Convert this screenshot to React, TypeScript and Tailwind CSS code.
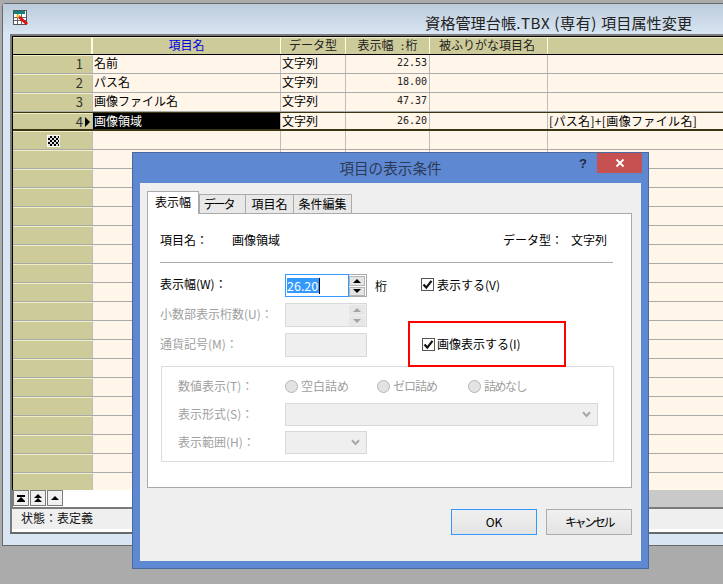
import React from "react";

const COLS = ["w-[80px]", "w-[188px]", "w-[65px]", "w-[84px]", "w-[118px]", "flex-1"];
const FONT = "font-['Noto_Sans_CJK_JP','Noto_Sans',sans-serif]";

const data: [string, string, string, string][] = [
  ["名前", "文字列", "22.53", ""],
  ["パス名", "文字列", "18.00", ""],
  ["画像ファイル名", "文字列", "47.37", ""],
  ["画像領域", "文字列", "26.20", "[パス名]+[画像ファイル名]"],
];

function Row({ n, idx }: { n: number; idx: number }) {
  const rec = data[idx];
  const current = idx === 3;
  const line = current ? "border-b-2 border-b-[#3a3512] border-t border-t-[#3a3512]" : "border-b border-b-[#aaaaaa]";
  return (
    <div className={`flex h-[19px] shrink-0 text-[12px] leading-[15px] text-black ${line}`}>
      <div className={`${COLS[0]} shrink-0 relative bg-[#cdcb99] border-r border-r-[#bdbdbd] border-t border-t-[#f0efc8] pr-[9px] text-right text-[13px] text-[#333]`}>
        {idx < 4 ? <span>{n}</span> : null}
        {current ? <span className="absolute right-[2px] top-[3px] w-0 h-0 border-y-[5px] border-y-transparent border-l-[5px] border-l-black" /> : null}
        {idx === 4 ? (
          <svg className="absolute left-[34px] top-[3px]" width="13" height="12" viewBox="0 0 13 12" shapeRendering="crispEdges">
            <rect width="13" height="12" fill="#fff" />
            <rect x="1" y="1" width="11" height="10" fill="#000" />
            {[0, 1, 2, 3, 4].map((r) =>
              [0, 1, 2, 3, 4, 5].map((c) =>
                (r + c) % 2 === 0 ? <rect key={`${r}-${c}`} x={1 + c * 2} y={1 + r * 2} width="1.5" height="2" fill="#ddd" /> : null
              )
            )}
          </svg>
        ) : null}
      </div>
      {[0, 1, 2, 3, 4].map((c) => {
        const val = rec ? (c === 4 ? rec[3] : c === 3 ? "" : rec[c]) : "";
        const sel = current && c === 0;
        return (
          <div
            key={c}
            className={`${COLS[c + 1]} ${c === 4 ? "tracking-[0.35px]" : "shrink-0 border-r border-r-[#bdbdbd]"} ${sel ? "bg-black text-white" : "bg-[#fff5e9]"} ${c === 2 ? "text-right pr-[2px] font-['DejaVu_Sans_Mono',monospace] text-[10px] text-[#222]" : "pl-px"} whitespace-nowrap overflow-hidden`}
          >
            {val}
          </div>
        );
      })}
    </div>
  );
}

function Spin({ disabled }: { disabled?: boolean }) {
  const c = disabled ? "#a5a5a5" : "#000";
  const Btn = ({ up }: { up?: boolean }) => (
    <div className={`h-[10px] flex items-center justify-center ${disabled ? "bg-[#e6e6e6]" : "bg-[#e4e4e4] border border-[#b5b5b5]"}`}>
      <span className={`w-0 h-0 border-x-[4px] border-x-transparent ${up ? "border-b-[4px]" : "border-t-[4px]"}`} style={up ? { borderBottomColor: c } : { borderTopColor: c }} />
    </div>
  );
  return (
    <div className="w-[17px] flex flex-col gap-px shrink-0 pt-px pr-px">
      <Btn up />
      <Btn />
    </div>
  );
}

function Check({ label, className }: { label: string; className?: string }) {
  return (
    <div className={`flex items-center gap-[3px] text-[12px] text-black ${className ?? ""}`}>
      <span className="w-[13px] h-[13px] border border-[#555] bg-white flex items-center justify-center">
        <svg width="11" height="11" viewBox="0 0 11 11"><path d="M1.5 5.5 L4.3 8.6 L9.5 1.8" fill="none" stroke="#111" strokeWidth="2.2" /></svg>
      </span>
      <span>{label}</span>
    </div>
  );
}

function Radio({ label, className, tight }: { label: string; className?: string; tight?: string }) {
  return (
    <div className={`flex items-center gap-[3px] ${className ?? ""}`}>
      <span className="w-[13px] h-[13px] rounded-full border border-[#b5b5b5] bg-[#e3e3e3]" />
      <span className={tight}>{label}</span>
    </div>
  );
}

function Chevron() {
  return (
    <svg width="9" height="7" viewBox="0 0 9 7" className="shrink-0">
      <path d="M1 1.2 L4.5 5 L8 1.2" fill="none" stroke="#a8a8a8" strokeWidth="2" />
    </svg>
  );
}

function Dialog() {
  return (
    <div className="absolute left-[132px] top-[152px] w-[517px] h-[417px] bg-[#5f88d3] border border-[#48699f] flex flex-col px-[7px] pb-[7px]">
      <div className="h-[30px] shrink-0 relative flex items-center justify-center text-[14.6px] text-[#2b3a55]">
        項目の表示条件
        <span className="absolute right-[54px] top-[1px] text-[13px] font-bold font-['Liberation_Sans',sans-serif] text-[#1f2a3f]">?</span>
        <span className="absolute -right-px top-0 w-[45px] h-[20px] bg-[#c75050] flex items-center justify-center">
          <svg width="10" height="10" viewBox="0 0 10 10"><path d="M1.5 1.5 L8.5 8.5 M8.5 1.5 L1.5 8.5" stroke="#fff" strokeWidth="1.8" /></svg>
        </span>
      </div>
      <div className="flex-1 bg-[#efefef] pt-[8px] pl-[7px] pr-[9px] flex flex-col">
        <div className="flex items-end h-[23px] relative z-10 text-[12px] text-black">
          <div className="w-[52px] h-[23px] bg-white border border-[#aaaaaa] border-b-0 flex items-center justify-center pb-[2px]">表示幅</div>
          <div className="w-[47px] h-[20px] bg-[#e8e8e8] border border-[#aaaaaa] flex items-center justify-center pr-[8px] tracking-[-2.2px]">データ</div>
          <div className="w-[48px] h-[20px] bg-[#e8e8e8] border border-[#aaaaaa] border-l-0 flex items-center justify-center">項目名</div>
          <div className="w-[58px] h-[20px] bg-[#e8e8e8] border border-[#aaaaaa] border-l-0 flex items-center justify-center">条件編集</div>
        </div>
        <div className="h-[275px] -mt-px bg-white border border-[#aaaaaa] pl-[12px] pr-[18px] pt-[16px] flex flex-col text-[12px] text-black">
          <div className="flex h-[20px] items-center">
            <span className="w-[72px]">項目名：</span>
            <span>画像領域</span>
            <span className="ml-auto w-[68px]">データ型：</span>
            <span className="w-[36px] mr-[6px]">文字列</span>
          </div>
          <div className="h-px bg-[#aaaaaa] mt-[12px]" />
          <div className="flex mt-[11px] h-[23px] items-center">
            <span className="w-[125px] pb-[3px]">表示幅(W)：</span>
            <div className="w-[82px] h-[23px] flex border border-[#a9a9a9] bg-white">
              <div className="flex-1 border border-[#3399ff] -m-px mr-0 flex items-center pl-[1px]">
                <span className="bg-[#3399ff] text-white text-[12.5px] leading-[15px] pr-px">26.20</span>
                <span className="w-px h-[16px] bg-black" />
              </div>
              <Spin />
            </div>
            <span className="ml-[8px]">桁</span>
            <Check label="表示する(V)" className="ml-[34px] pb-[2px]" />
          </div>
          <div className="flex mt-[6px] h-[24px] items-center text-[#a0a0a0]">
            <span className="w-[125px] pb-[2px]">小数部表示桁数(U)：</span>
            <div className="w-[82px] h-[24px] flex border border-[#d9d9d9] bg-[#efefef]">
              <div className="flex-1" />
              <Spin disabled />
            </div>
          </div>
          <div className="flex mt-[6px] h-[24px] items-center text-[#a0a0a0]">
            <span className="w-[125px] pb-[2px]">通貨記号(M)：</span>
            <div className="w-[82px] h-[24px] border border-[#d9d9d9] bg-[#efefef]" />
            <Check label="画像表示する(I)" className="ml-[55px] pb-[2px] [&>span:last-child]:-ml-px" />
          </div>
          <div className="mt-[9px] h-[96px] ml-px -mr-px border border-[#dcdcdc] pl-[16px] pt-[8px] flex flex-col text-[#a0a0a0]">
            <div className="flex h-[22px] items-center">
              <span className="w-[107px]">数値表示(T)：</span>
              <Radio label="空白詰め" className="w-[92px]" />
              <Radio label="ゼロ詰め" className="w-[91px]" tight="tracking-[-1px]" />
              <Radio label="詰めなし" tight="tracking-[-1.5px]" />
            </div>
            <div className="flex h-[24px] items-center mt-[5px]">
              <span className="w-[107px]">表示形式(S)：</span>
              <div className="w-[313px] h-[23px] border border-[#d9d9d9] bg-[#efefef] flex items-center justify-end pr-[6px]"><Chevron /></div>
            </div>
            <div className="flex h-[24px] items-center mt-[4px]">
              <span className="w-[107px]">表示範囲(H)：</span>
              <div className="w-[82px] h-[23px] border border-[#d9d9d9] bg-[#efefef] flex items-center justify-end pr-[6px]"><Chevron /></div>
            </div>
          </div>
        </div>
        <div className="flex justify-end gap-[9px] mt-[21px] text-[12px] text-black">
          <button className="w-[86px] h-[26px] bg-gradient-to-b from-[#f0f0f0] to-[#e3e3e3] border border-[#3399ff]">OK</button>
          <button className="w-[86px] h-[26px] bg-gradient-to-b from-[#f0f0f0] to-[#e3e3e3] border border-[#acacac] tracking-[-2.4px]">キャンセル</button>
        </div>
      </div>
    </div>
  );
}

function NavBtn({ bars, up }: { bars: number; up: number }) {
  return (
    <div className="w-[16px] h-[16px] bg-[#f0f0f0] border border-[#7a7a7a] flex flex-col items-center justify-center">
      {bars ? <span className="w-[8px] h-[2px] bg-black" /> : null}
      {Array.from({ length: up }).map((_, i) => (
        <span key={i} className="w-0 h-0 border-x-[4px] border-x-transparent border-b-[4px] border-b-black" />
      ))}
      {bars ? <span className="w-[8px] h-[1px] bg-black" /> : null}
    </div>
  );
}

const HCELL = "shrink-0 border-r border-r-[#fffde0] border-t border-t-[#efeec6]";
const MONO = "font-['DejaVu_Sans_Mono',monospace] text-[10px]";

export default function App() {
  return (
    <div className={`relative w-[723px] h-[586px] overflow-hidden bg-[#ababab] pt-[3px] pl-[2px] ${FONT}`}>
      <div className="h-[543px] bg-[#d8e5f2] border border-[#696969] border-r-0 rounded-tl-[4px] flex flex-col pl-[7px]">
        <div className="h-[30px] -ml-[7px] pl-[10px] shrink-0 bg-gradient-to-b from-[#bccbdb] to-[#d8e5f2] flex items-center relative">
          <svg width="16" height="16" viewBox="0 0 16 16" shapeRendering="crispEdges" className="mt-[-3px]">
            <rect x="0" y="0" width="13" height="14" fill="#fff" stroke="#555" />
            <rect x="1" y="1" width="11" height="3" fill="#118080" />
            <path d="M4.5 4V14M8.5 4V14M1 7.5H13M1 10.5H13" stroke="#666" />
            <path d="M5 6 L14 14" stroke="#e01010" strokeWidth="3" shapeRendering="auto" />
            <path d="M4 5 L6 7" stroke="#f5d020" strokeWidth="3" shapeRendering="auto" />
          </svg>
          <span className="absolute left-[422px] top-[5px] text-[15.2px] leading-[26px] text-[#222] whitespace-nowrap">
            資格管理台帳<span className="tracking-[0.55px]">.TBX (専有) </span>項目属性変更
          </span>
        </div>
        <div className="flex-1 border-t-2 border-l-2 border-[#7b7b7b] min-h-0 flex flex-col">
          <div className="border-t border-l border-black flex flex-col">
            <div className="flex h-[18px] shrink-0 text-[12px] leading-[14px] border-b border-b-black bg-[#cdcb99] text-[#222] text-center">
              <div className={`${COLS[0]} ${HCELL} border-r-2`} />
              <div className={`${COLS[1]} ${HCELL} text-[#0000e0]`}>項目名</div>
              <div className={`${COLS[2]} ${HCELL}`}>データ型</div>
              <div className={`${COLS[3]} ${HCELL} whitespace-nowrap`}>
                表示幅<span className={MONO}>&nbsp;:</span>桁
              </div>
              <div className={`${COLS[4]} ${HCELL} text-left pl-[9px] whitespace-nowrap`}>被ふりがな項目名</div>
              <div className="flex-1 border-t border-t-[#efeec6]" />
            </div>
            <div className="flex flex-col h-[435px] overflow-hidden">
              {Array.from({ length: 24 }).map((_, i) => (
                <Row key={i} n={i + 1} idx={i} />
              ))}
            </div>
          </div>
          <div className="flex h-[17px] shrink-0 bg-white border-l border-l-[#7b7b7b]">
            <div className="flex gap-px">
              <NavBtn bars={1} up={1} />
              <NavBtn bars={0} up={2} />
              <NavBtn bars={0} up={1} />
            </div>
            <div className="w-[580px] bg-white" />
            <div className="flex-1 bg-[#c9c9c9]" />
          </div>
          <div className="h-[25px] shrink-0 bg-[#efefef] border-t-2 border-t-[#7b7b7b] text-[12px] leading-[17px] pl-[9px] text-[#111] border-b-[3px] border-b-white">状態：表定義</div>
          <div className="flex-1 bg-[#d8e5f2] border-t-2 border-t-[#696969] -ml-[2px]" />
        </div>
      </div>
      <Dialog />
      <div className="absolute left-[408px] top-[321px] w-[158px] h-[46px] border-[2px] border-[#ff0000] z-20" />
      <div className="absolute left-0 right-0 bottom-0 h-[2px] bg-white" />
    </div>
  );
}
